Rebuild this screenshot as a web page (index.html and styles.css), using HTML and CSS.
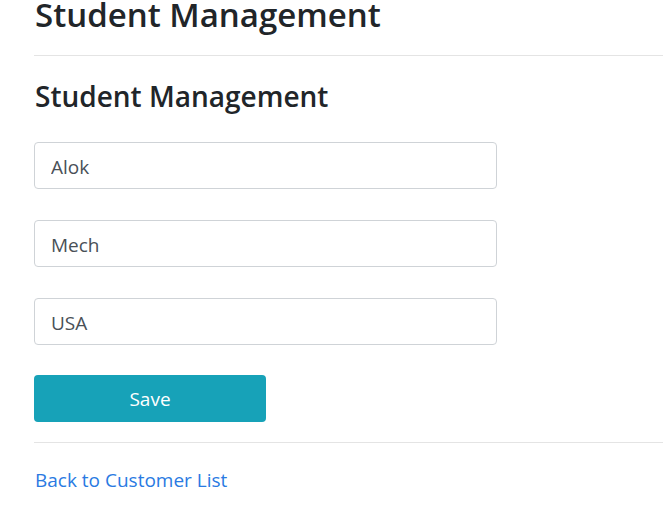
FILE: index.html
```html
<!DOCTYPE html>
<html lang="en">
<head>
<meta charset="utf-8">
<title>Student Management</title>
<link rel="stylesheet" href="styles.css">
</head>
<body>
<div class="page">
  <h1 class="title">Student Management</h1>
  <hr class="rule">
  <h3 class="subtitle">Student Management</h3>
  <form class="form">
    <input class="field" type="text" value="Alok">
    <input class="field" type="text" value="Mech">
    <input class="field" type="text" value="USA">
    <button class="save" type="button">Save</button>
  </form>
  <hr class="rule rule-bottom">
  <a class="back" href="#">Back to Customer List</a>
</div>
</body>
</html>
```
FILE: styles.css
```css
* { box-sizing: border-box; }
html, body { margin: 0; padding: 0; background: #fff; }
body {
  font-family: "Open Sans", "Noto Sans", sans-serif;
  color: #212529;
  overflow: hidden;
}
.page {
  padding-left: 34px;
  display: flex;
  flex-direction: column;
  align-items: flex-start;
}
.title {
  margin: 0 0 0 1px;
  font-size: 33px;
  font-weight: 600;
  line-height: 30px;
  white-space: nowrap;
}
.rule {
  align-self: stretch;
  margin: 25px 0 0 0;
  border: 0;
  border-top: 1px solid #e4e4e4;
  height: 0;
}
.subtitle {
  margin: 22px 0 0 1px;
  font-size: 28px;
  font-weight: 600;
  line-height: 36px;
}
.form {
  display: flex;
  flex-direction: column;
  gap: 31px;
  margin-top: 28px;
}
.field {
  width: 463px;
  height: 47px;
  border: 1px solid #cfd3d7;
  border-radius: 4px;
  padding: 2px 16px 0;
  font-family: inherit;
  font-size: 19px;
  color: #495057;
  background: #fff;
  outline: none;
}
.save {
  width: 232px;
  height: 47px;
  border: 0;
  border-radius: 4px;
  background: #17a2b8;
  color: #fff;
  font-family: inherit;
  font-size: 19px;
  font-weight: 400;
  margin-top: -1px;
  padding-top: 2px;
}
.rule-bottom { margin-top: 20px; }
.back {
  margin-top: 24px;
  margin-left: 1px;
  font-size: 19px;
  line-height: 26px;
  color: #2a7ae2;
  text-decoration: none;
}
```
